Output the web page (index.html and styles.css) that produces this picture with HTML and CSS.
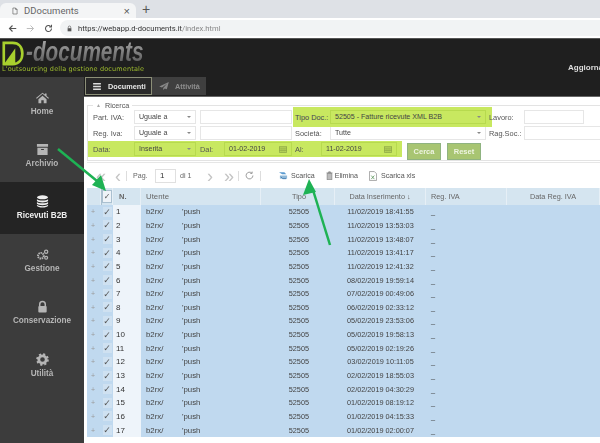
FILE: index.html
```html
<!DOCTYPE html>
<html lang="it">
<head>
<meta charset="utf-8">
<title>DDocuments</title>
<link rel="stylesheet" href="styles.css">
</head>
<body>
<div class="tabstrip">
  <div class="tab">
    <svg class="tab-ico" viewBox="0 0 10 12"><path d="M1.500 1h4.500l2.500 2.500V11h-7z M6 1v2.500h2.500" fill="none" stroke="#555" stroke-width="1"/></svg>
    <span class="tab-title">DDocuments</span>
    <span class="tab-x">×</span>
  </div>
  <span class="tab-plus">+</span>
</div>
<div class="addrbar">
  <svg class="nav-ico" viewBox="0 0 12 12"><path d="M11 6H2M6 2L2 6l4 4" fill="none" stroke="#555" stroke-width="1.500"/></svg>
  <svg class="nav-ico" viewBox="0 0 12 12"><path d="M1 6h9M6 2l4 4-4 4" fill="none" stroke="#bbb" stroke-width="1.300"/></svg>
  <svg class="nav-ico" viewBox="0 0 12 12"><path d="M10 6a4 4 0 1 1-1.200-2.800M10 1v3H7" fill="none" stroke="#555" stroke-width="1.400"/></svg>
  <div class="pill">
    <svg class="lock-ico" viewBox="0 0 8 10"><path d="M2 4.500V3a2 2 0 0 1 4 0v1.500" fill="none" stroke="#555"/><rect x="1" y="4.500" width="6" height="5" fill="#555"/></svg>
    <span class="url">https://webapp.d-documents.it<span class="url-dim">/index.html</span></span>
  </div>
</div>
<header class="topbar">
  <div class="logo">
    <svg class="logo-d" viewBox="0 0 26 28"><path d="M2 2h10c7 0 11 5 11 12s-4 12-11 12H2z" fill="none" stroke="#a8d02e" stroke-width="3"/><path d="M3 25L15 8v17z" fill="#a8d02e"/></svg>
    <div class="logo-words">
      <span class="logo-main">-documents</span>
    </div>
    <span class="logo-tag">L'outsourcing della gestione documentale</span>
  </div>
  <span class="update">Aggiorna</span>
</header>
<div class="app">
  <nav class="side">
    <a class="side-item"><svg class="side-ico" viewBox="0 0 16 14"><path d="M8 1L0 7.500l1 1 7-6 7 6 1-1-3-2.500V2h-2v1.300zM3 9l5-4.300L13 9v5H9.500v-3.500h-3V14H3z" fill="currentColor"/></svg><span>Home</span></a>
    <a class="side-item"><svg class="side-ico" viewBox="0 0 14 14"><path d="M1 1h12v3H1zM1.500 5h11v8h-11z M5.500 6.500v1h3v-1z" fill="currentColor" fill-rule="evenodd"/></svg><span>Archivio</span></a>
    <a class="side-item active"><svg class="side-ico" viewBox="0 0 14 14"><ellipse cx="7" cy="2.500" rx="6" ry="2.200" fill="currentColor"/><path d="M1 4.500c1 2 11 2 12 0v2c-1 2-11 2-12 0zM1 7.500c1 2 11 2 12 0v2c-1 2-11 2-12 0zM1 10.500c1 2 11 2 12 0v1c-1 2.500-11 2.500-12 0z" fill="currentColor"/></svg><span>Ricevuti B2B</span></a>
    <a class="side-item"><svg class="side-ico" viewBox="0 0 16 14"><circle cx="6" cy="8.500" r="3.500" fill="none" stroke="currentColor" stroke-width="2.400" stroke-dasharray="1.800 .8"/><circle cx="12.500" cy="3.500" r="2" fill="none" stroke="currentColor" stroke-width="1.500"/><circle cx="12.500" cy="11" r="1.800" fill="none" stroke="currentColor" stroke-width="1.500"/></svg><span>Gestione</span></a>
    <a class="side-item"><svg class="side-ico" viewBox="0 0 14 14"><path d="M4 6.500V4.500a3 3 0 0 1 6 0v2" fill="none" stroke="currentColor" stroke-width="1.600"/><rect x="2.500" y="6.500" width="9" height="7" rx="1" fill="currentColor"/></svg><span>Conservazione</span></a>
    <a class="side-item"><svg class="side-ico" viewBox="0 0 14 14"><circle cx="7" cy="7" r="4" fill="none" stroke="currentColor" stroke-width="3"/><circle cx="7" cy="7" r="5.800" fill="none" stroke="currentColor" stroke-width="2" stroke-dasharray="2.300 2.250"/></svg><span>Utilità</span></a>
  </nav>
  <div class="main">
    <div class="tabs">
      <div class="mtab on"><svg class="mtab-ico" viewBox="0 0 10 9"><path d="M0 0h10v2H0zM0 3.500h10v2H0zM0 7h10v2H0z" fill="#ddd"/></svg>Documenti</div>
      <div class="mtab off"><svg class="mtab-ico wide" viewBox="0 0 12 10"><path d="M12 0L0 5.500l3.500 1.300L10 2 5 7.500V10l2-2 2.500 1z" fill="#888"/></svg>Attività</div>
    </div>
    <div class="content">
      <fieldset class="search">
        <legend><span class="caret">▲</span> Ricerca</legend>
        <div class="frow">
          <label class="lab">Part. IVA:</label>
          <div class="sel w62">Uguale a<i class="drop"></i></div>
          <div class="inp w92"></div>
          <div class="hl hl-tipo">
            <label class="lab lab-tipo">Tipo Doc.:</label>
            <div class="sel w156 sel-hl">52505 - Fatture ricevute XML B2B<i class="drop"></i></div>
          </div>
          <label class="lab lab-lav">Lavoro:</label>
          <div class="inp w60"></div>
        </div>
        <div class="frow">
          <label class="lab">Reg. Iva:</label>
          <div class="sel w62">Uguale a<i class="drop"></i></div>
          <div class="inp w92"></div>
          <label class="lab lab-soc">Società:</label>
          <div class="sel w156">Tutte<i class="drop"></i></div>
          <label class="lab lab-rag">Rag.Soc.:</label>
          <div class="inp w80"></div>
        </div>
        <div class="frow">
          <div class="hl hl-date">
            <label class="lab">Data:</label>
            <div class="sel w62 sel-hl">Inserita<i class="drop"></i></div>
            <label class="lab lab-dal">Dal:</label>
            <div class="sel date1 sel-hl">01-02-2019<svg class="cal" viewBox="0 0 10 9"><path d="M.5.500h9v8h-9zM.5 2.500h9M2.500 2.500v6M5 2.500v6M7.500 2.500v6M.5 5.500h9" fill="none" stroke="#7f9a40" stroke-width=".8"/></svg></div>
            <label class="lab lab-al">Al:</label>
            <div class="sel date2 sel-hl">11-02-2019<svg class="cal" viewBox="0 0 10 9"><path d="M.5.500h9v8h-9zM.5 2.500h9M2.500 2.500v6M5 2.500v6M7.500 2.500v6M.5 5.500h9" fill="none" stroke="#7f9a40" stroke-width=".8"/></svg></div>
          </div>
          <button class="btn first">Cerca</button>
          <button class="btn">Reset</button>
        </div>
      </fieldset>
      <div class="toolbar">
        <span class="tb tb-g1">«</span>
        <span class="tb tb-g2">‹</span>
        <i class="sep s1"></i>
        <span class="tb-text pag">Pag.</span>
        <span class="page-box">1</span>
        <span class="tb-text of">di 1</span>
        <span class="tb tb-g3">›</span>
        <span class="tb tb-g4">»</span>
        <i class="sep s2"></i>
        <svg class="refresh" viewBox="0 0 12 12"><path d="M10.500 6a4.500 4.500 0 1 1-1.500-3.300M9.500 .8v2.400H7" fill="none" stroke="#888" stroke-width="1.100"/></svg>
        <i class="sep s3"></i>
        <svg class="act-ico" viewBox="0 0 10 10"><path d="M0 1.500h6l2 2H3.500z" fill="#5b9bd0"/><path d="M1 5h8v3.500H1z" fill="#8fb8d8"/><path d="M2 6.500l2 2h4" stroke="#3b78b0" fill="none"/></svg>
        <span class="act">Scarica</span>
        <svg class="act-ico del-ico" viewBox="0 0 8 10"><path d="M.5 2h7M3 2V.8h2V2M1.300 2.500h5.400V10H1.300z" fill="#bbb" stroke="#777" stroke-width=".7"/></svg>
        <span class="act">Elimina</span>
        <svg class="act-ico xls-ico" viewBox="0 0 9 11"><path d="M.5.500h5.500l2.500 2.500v7.500h-8z" fill="#fff" stroke="#888" stroke-width=".8"/><path d="M2.500 5l3.500 4M6 5L2.500 9" stroke="#4c8a4c" stroke-width=".8"/></svg>
        <span class="act">Scarica xls</span>
      </div>
      <div class="grid">
        <div class="ghead">
          <div class="c-plus"></div>
          <div class="c-chk head-chk"><span class="chk boxed">✓</span></div>
          <div class="c-n"><span>N.</span></div>
          <div class="c-ute">Utente</div>
          <div class="c-tipo">Tipo</div>
          <div class="c-ins">Data Inserimento ↓</div>
          <div class="c-reg">Reg. IVA</div>
          <div class="c-dreg">Data Reg. IVA</div>
        </div>
        <div class="gbody">
          <div class="grow"><div class="c-plus">+</div><div class="c-chk"><span class="chk">✓</span></div><div class="c-n">1</div><div class="c-ute"><span class="u1">b2rx/</span><span>'push</span></div><div class="c-tipo">52505</div><div class="c-ins">11/02/2019 18:41:55</div><div class="c-reg">_</div><div class="c-dreg"></div></div>
          <div class="grow"><div class="c-plus">+</div><div class="c-chk"><span class="chk">✓</span></div><div class="c-n">2</div><div class="c-ute"><span class="u1">b2rx/</span><span>'push</span></div><div class="c-tipo">52505</div><div class="c-ins">11/02/2019 13:53:03</div><div class="c-reg">_</div><div class="c-dreg"></div></div>
          <div class="grow"><div class="c-plus">+</div><div class="c-chk"><span class="chk">✓</span></div><div class="c-n">3</div><div class="c-ute"><span class="u1">b2rx/</span><span>'push</span></div><div class="c-tipo">52505</div><div class="c-ins">11/02/2019 13:48:07</div><div class="c-reg">_</div><div class="c-dreg"></div></div>
          <div class="grow"><div class="c-plus">+</div><div class="c-chk"><span class="chk">✓</span></div><div class="c-n">4</div><div class="c-ute"><span class="u1">b2rx/</span><span>'push</span></div><div class="c-tipo">52505</div><div class="c-ins">11/02/2019 13:41:17</div><div class="c-reg">_</div><div class="c-dreg"></div></div>
          <div class="grow"><div class="c-plus">+</div><div class="c-chk"><span class="chk">✓</span></div><div class="c-n">5</div><div class="c-ute"><span class="u1">b2rx/</span><span>'push</span></div><div class="c-tipo">52505</div><div class="c-ins">11/02/2019 12:41:32</div><div class="c-reg">_</div><div class="c-dreg"></div></div>
          <div class="grow"><div class="c-plus">+</div><div class="c-chk"><span class="chk">✓</span></div><div class="c-n">6</div><div class="c-ute"><span class="u1">b2rx/</span><span>'push</span></div><div class="c-tipo">52505</div><div class="c-ins">08/02/2019 19:59:14</div><div class="c-reg">_</div><div class="c-dreg"></div></div>
          <div class="grow"><div class="c-plus">+</div><div class="c-chk"><span class="chk">✓</span></div><div class="c-n">7</div><div class="c-ute"><span class="u1">b2rx/</span><span>'push</span></div><div class="c-tipo">52505</div><div class="c-ins">07/02/2019 00:49:06</div><div class="c-reg">_</div><div class="c-dreg"></div></div>
          <div class="grow"><div class="c-plus">+</div><div class="c-chk"><span class="chk">✓</span></div><div class="c-n">8</div><div class="c-ute"><span class="u1">b2rx/</span><span>'push</span></div><div class="c-tipo">52505</div><div class="c-ins">06/02/2019 02:33:12</div><div class="c-reg">_</div><div class="c-dreg"></div></div>
          <div class="grow"><div class="c-plus">+</div><div class="c-chk"><span class="chk">✓</span></div><div class="c-n">9</div><div class="c-ute"><span class="u1">b2rx/</span><span>'push</span></div><div class="c-tipo">52505</div><div class="c-ins">05/02/2019 23:53:06</div><div class="c-reg">_</div><div class="c-dreg"></div></div>
          <div class="grow"><div class="c-plus">+</div><div class="c-chk"><span class="chk">✓</span></div><div class="c-n">10</div><div class="c-ute"><span class="u1">b2rx/</span><span>'push</span></div><div class="c-tipo">52505</div><div class="c-ins">05/02/2019 19:58:13</div><div class="c-reg">_</div><div class="c-dreg"></div></div>
          <div class="grow"><div class="c-plus">+</div><div class="c-chk"><span class="chk">✓</span></div><div class="c-n">11</div><div class="c-ute"><span class="u1">b2rx/</span><span>'push</span></div><div class="c-tipo">52505</div><div class="c-ins">05/02/2019 02:19:26</div><div class="c-reg">_</div><div class="c-dreg"></div></div>
          <div class="grow"><div class="c-plus">+</div><div class="c-chk"><span class="chk">✓</span></div><div class="c-n">12</div><div class="c-ute"><span class="u1">b2rx/</span><span>'push</span></div><div class="c-tipo">52505</div><div class="c-ins">03/02/2019 10:11:05</div><div class="c-reg">_</div><div class="c-dreg"></div></div>
          <div class="grow"><div class="c-plus">+</div><div class="c-chk"><span class="chk">✓</span></div><div class="c-n">13</div><div class="c-ute"><span class="u1">b2rx/</span><span>'push</span></div><div class="c-tipo">52505</div><div class="c-ins">02/02/2019 18:55:03</div><div class="c-reg">_</div><div class="c-dreg"></div></div>
          <div class="grow"><div class="c-plus">+</div><div class="c-chk"><span class="chk">✓</span></div><div class="c-n">14</div><div class="c-ute"><span class="u1">b2rx/</span><span>'push</span></div><div class="c-tipo">52505</div><div class="c-ins">02/02/2019 04:30:29</div><div class="c-reg">_</div><div class="c-dreg"></div></div>
          <div class="grow"><div class="c-plus">+</div><div class="c-chk"><span class="chk">✓</span></div><div class="c-n">15</div><div class="c-ute"><span class="u1">b2rx/</span><span>'push</span></div><div class="c-tipo">52505</div><div class="c-ins">01/02/2019 08:19:12</div><div class="c-reg">_</div><div class="c-dreg"></div></div>
          <div class="grow"><div class="c-plus">+</div><div class="c-chk"><span class="chk">✓</span></div><div class="c-n">16</div><div class="c-ute"><span class="u1">b2rx/</span><span>'push</span></div><div class="c-tipo">52505</div><div class="c-ins">01/02/2019 04:15:33</div><div class="c-reg">_</div><div class="c-dreg"></div></div>
          <div class="grow"><div class="c-plus">+</div><div class="c-chk"><span class="chk">✓</span></div><div class="c-n">17</div><div class="c-ute"><span class="u1">b2rx/</span><span>'push</span></div><div class="c-tipo">52505</div><div class="c-ins">01/02/2019 02:00:07</div><div class="c-reg">_</div><div class="c-dreg"></div></div>
        </div>
      </div>
    </div>
  </div>
</div>
<svg class="arrows" viewBox="0 0 600 443">
  <path d="M58 149L97 181" stroke="#1eb254" stroke-width="2.500" fill="none"/>
  <path d="M106 191L92 185L101 175z" fill="#1eb254"/>
  <path d="M330 245L313 190" stroke="#1eb254" stroke-width="2.500" fill="none"/>
  <path d="M309 179L316 192L303 195z" fill="#1eb254"/>
</svg>
</body>
</html>
```
FILE: styles.css
```css
* { box-sizing: border-box; }
html, body { margin: 0; padding: 0; }
body {
  width: 600px;
  height: 443px;
  overflow: hidden;
  position: relative;
  background: #fff;
  font-family: "Liberation Sans", Arial, sans-serif;
  font-size: 8px;
  color: #444;
  filter: blur(.35px);
}
.tabstrip { height: 18px; background: #dee1e6; display: flex; align-items: flex-end; }
.tab { width: 136px; height: 15px; background: #f4f5f6; border-radius: 6px 6px 0 0; display: flex; align-items: center; padding-left: 12px; }
.tab-ico { width: 6px; height: 8px; margin-right: 6px; }
.tab-title { flex: 1; font-family: "Roboto", sans-serif; font-size: 9.500px; color: #666; }
.tab-x { font-size: 11px; color: #555; margin-right: 6px; }
.tab-plus { font-size: 14px; color: #555; margin-left: 6px; line-height: 17px; }
.addrbar { height: 20px; background: #fff; display: flex; align-items: center; padding: 0 0 0 8px; gap: 9px; }
.nav-ico { width: 9px; height: 9px; flex: none; }
.pill { flex: 1; height: 16px; background: #f1f3f4; border-radius: 8px 0 0 8px; display: flex; align-items: center; padding-left: 7px; margin-left: -2px; }
.lock-ico { width: 5px; height: 7px; margin-right: 6px; }
.url { font-family: "Roboto", sans-serif; font-size: 7.600px; color: #333; }
.url-dim { color: #888; }
.topbar { height: 39px; background: #1f1f1f; border-top: 1px solid #555; display: flex; justify-content: space-between; position: relative; }
.logo { position: relative; width: 150px; height: 38px; }
.logo-d { position: absolute; left: 2px; top: 2px; width: 23px; height: 25px; }
.logo-words { position: absolute; left: 26px; top: 0; white-space: nowrap; transform-origin: left top; transform: scaleX(.74); }
.logo-main { display: block; font-weight: 700; font-style: italic; font-size: 28px; line-height: 26px; background: linear-gradient(#aaa, #555); -webkit-background-clip: text; background-clip: text; color: transparent; }
.logo-tag { position: absolute; left: 2px; top: 26px; font-family: "DejaVu Sans", sans-serif; font-size: 6.500px; line-height: 8px; letter-spacing: .15px; color: #9dbb2e; white-space: nowrap; }
.update { position: absolute; left: 568px; top: 24px; color: #ddd; font-weight: 700; font-size: 8px; white-space: nowrap; }
.app { display: flex; height: 366px; }
.side { width: 84px; flex: none; background: #3c3c3c; display: flex; flex-direction: column; }
.side-item { height: 52.400px; display: flex; flex-direction: column; align-items: center; justify-content: center; gap: 3px; color: #b5b5b5; font-size: 8.200px; font-weight: 700; }
.side-item.active { background: #242424; color: #eee; }
.side-ico { width: 13px; height: 13px; }
.main { flex: 1; min-width: 0; display: flex; flex-direction: column; background: #1f1f1f; }
.tabs { height: 19px; display: flex; padding-left: 1px; }
.mtab { height: 18px; display: flex; align-items: center; font-weight: 700; font-size: 7.300px; }
.mtab.on { width: 67px; background: #2a2a2a; border: 1px solid #8c8f78; color: #e8e8e8; padding-left: 7px; }
.mtab.off { width: 54px; background: #3f3f3f; color: #8e8e8e; padding-left: 7px; }
.mtab-ico { width: 8px; height: 7px; margin-right: 7px; }
.mtab-ico.wide { width: 10px; height: 8px; margin-right: 6px; }
.content { flex: 1; background: #fff; border-top: 1px solid #666; padding: 5px 0 0 3px; min-height: 0; overflow: hidden; }
.search { margin: 0; border: 1px solid #e3e3e3; border-right: 0; padding: 0; height: 59px; min-width: 0; }
.search legend { margin-left: 5px; padding: 0 3px; font-size: 7.200px; line-height: 7px; color: #555; }
.caret { color: #aaa; font-size: 5px; margin-right: 2px; vertical-align: 1px; }
.frow { display: flex; height: 16px; align-items: center; white-space: nowrap; font-size: 7.100px; }
.lab { width: 46px; flex: none; padding-left: 5px; color: #555; font-size: 7.400px; }
.sel { flex: none; height: 14px; border: 1px solid #e6e6e6; background: #fff; padding: 0 4px; line-height: 12px; display: flex; align-items: center; justify-content: space-between; color: #444; }
.inp { flex: none; height: 14px; border: 1px solid #e6e6e6; background: #fff; }
.w62 { width: 62px; }
.w92 { width: 92px; margin-left: 4px; }
.w156 { width: 156px; }
.w60 { width: 60px; }
.w80 { width: 80px; }
.drop { width: 0; height: 0; border-left: 2px solid transparent; border-right: 2px solid transparent; border-top: 2.500px solid #888; }
.hl { background: #c8e860; display: flex; align-items: center; flex: none; }
.hl-tipo { width: 199px; height: 20px; margin: 0 -3px 0 1px; position: relative; z-index: 1; }
.hl-tipo .lab-tipo { width: 37px; padding-left: 2px; color: #445; }
.sel-hl { background: transparent; border-color: #b7da4e; }
.lab-soc { width: 37px; margin-left: 1px; padding-left: 2px; }
.lab-lav { width: 35px; padding-left: 0; position: relative; z-index: 2; }
.lab-rag { width: 35px; padding-left: 0; margin-left: 3px; }
.hl-date { width: 314px; height: 16px; }
.lab-dal { width: 28px; padding-left: 4px; }
.lab-al { width: 29px; padding-left: 3px; }
.date1 { width: 68px; }
.date2 { width: 76px; }
.cal { width: 8px; height: 7px; }
.btn { height: 17px; width: 34px; border: 1px solid #8fb380; background: #a8c572; color: #eef4e2; font-family: "Liberation Sans", sans-serif; font-weight: 700; font-size: 7.500px; padding: 0; margin: 4px 6px 0 0; }
.btn.first { margin-left: 5px; }
.toolbar { height: 26px; margin-top: 1px; border-top: 1px solid #e6e6e6; display: flex; align-items: center; white-space: nowrap; padding-left: 6px; font-size: 7.100px; color: #666; }
.tb { font-size: 18px; color: #c4c4c4; line-height: 16px; }
.tb-g1 { width: 18px; padding-left: 3px; }
.tb-g2 { width: 15px; padding-left: 4px; }
.sep { width: 1px; height: 10px; background: #ddd; flex: none; }
.s1 { margin-right: 6px; }
.pag { width: 22px; }
.page-box { width: 21px; height: 14px; border: 1px solid #e0e0e0; font-size: 8px; padding: 1px 0 0 4px; margin-right: 4px; color: #333; flex: none; }
.tb-text { color: #666; }
.of { width: 12px; }
.tb-g3 { margin-left: 15px; width: 17px; }
.tb-g4 { width: 14px; }
.s2 { margin-right: 6px; }
.refresh { width: 9px; height: 9px; margin-right: 6px; flex: none; }
.s3 { margin-right: 18px; }
.act-ico { width: 9px; height: 9px; margin-right: 3px; flex: none; }
.act { color: #555; }
.del-ico { width: 7px; margin-left: 11px; margin-right: 2px; }
.xls-ico { width: 8px; height: 10px; margin-left: 11px; margin-right: 4px; }
.grid { font-size: 7.300px; color: #444; }
.ghead, .grow { display: flex; white-space: nowrap; }
.ghead { height: 17px; background: #d5e5f0; align-items: stretch; color: #666; }
.ghead > div { display: flex; align-items: center; border-right: 1px solid #e6eff6; }
.grow { height: 13.650px; background: #c0d9ef; align-items: stretch; }
.grow > div { display: flex; align-items: center; }
.c-plus { width: 14px; flex: none; justify-content: center; color: #999; font-size: 7px; padding-right: 2px; }
.c-chk { width: 12px; flex: none; justify-content: center; }
.head-chk { border-left: 1px solid #aac0d0; }
.c-n { width: 28px; flex: none; padding-left: 3px; font-size: 8px; background: #eef4fa; color: #333; }
.ghead .c-n { background: transparent; padding-left: 6px; font-size: 7.500px; color: #666; font-weight: 700; }
.c-ute { width: 120px; flex: none; padding-left: 5px; font-size: 7.800px; }
.u1 { width: 36px; display: inline-block; }
.c-tipo { width: 74px; flex: none; justify-content: flex-end; padding-right: 26px; }
.ghead .c-tipo { padding-right: 28px; }
.c-ins { width: 91px; flex: none; justify-content: center; }
.c-reg { width: 81px; flex: none; padding-left: 5px; }
.c-dreg { flex: 1; justify-content: center; }
.chk { font-size: 9px; line-height: 10px; color: #555; font-family: "DejaVu Sans", sans-serif; background: #cfe1f1; width: 9px; text-align: center; }
.chk.boxed { background: #eef3f8; border: 1px solid #aac0d0; height: 13px; width: 11px; font-size: 8px; line-height: 11px; }
.arrows { position: absolute; left: 0; top: 0; width: 600px; height: 443px; pointer-events: none; z-index: 5; }
```
